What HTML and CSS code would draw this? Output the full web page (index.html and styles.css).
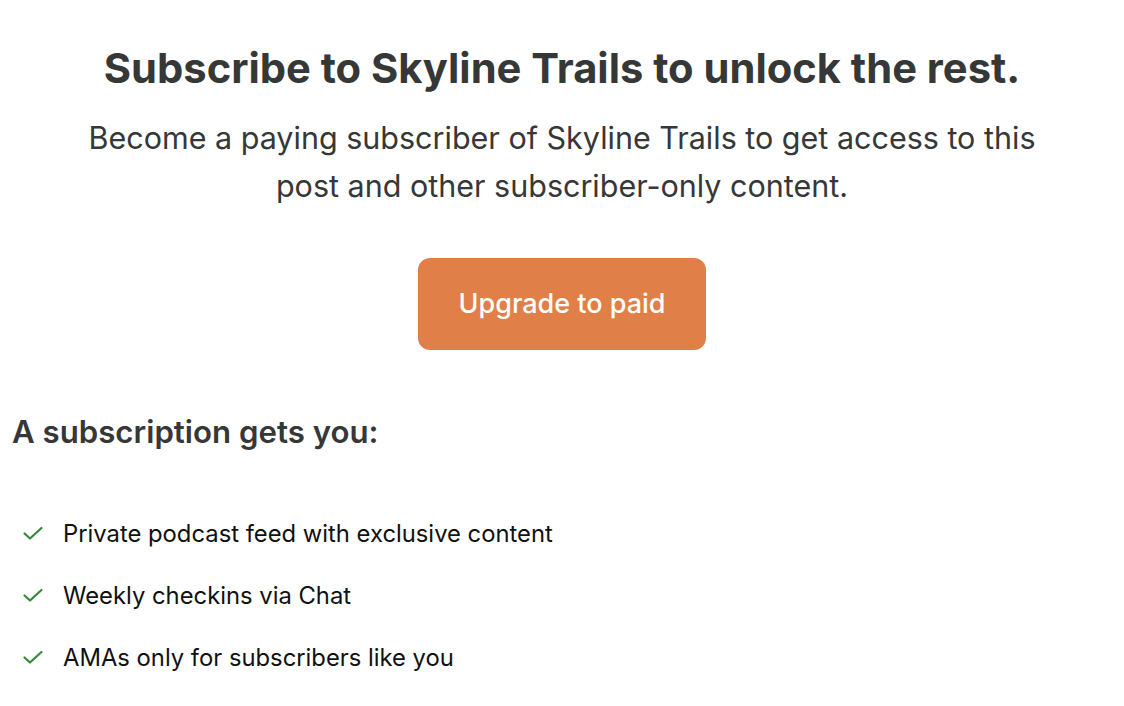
FILE: index.html
```html
<!DOCTYPE html>
<html lang="en">
<head>
    <meta charset="UTF-8">
    <meta name="viewport" content="width=device-width, initial-scale=1.0">
    <title>Subscribe to Skyline Trails</title>
    <link rel="stylesheet" href="styles.css">
</head>
<body>

<div class="paywall">
    <div class="paywall-head">
        <h2 class="paywall-title">Subscribe to Skyline Trails to unlock the rest.</h2>
        <p class="paywall-text">Become a paying subscriber of Skyline Trails to get access to this post and other subscriber-only content.</p>
        <a class="upgrade-btn" href="#">Upgrade to paid</a>
    </div>

    <h3 class="perks-title">A subscription gets you:</h3>

    <ul class="perks">
        <li>
            <svg class="check" viewBox="0 0 24 24" width="24" height="24"><path d="M3.5 12.5l5.5 5L20.5 7" fill="none" stroke="#368a36" stroke-width="2.2" stroke-linecap="round" stroke-linejoin="round"/></svg>
            Private podcast feed with exclusive content
        </li>
        <li>
            <svg class="check" viewBox="0 0 24 24" width="24" height="24"><path d="M3.5 12.5l5.5 5L20.5 7" fill="none" stroke="#368a36" stroke-width="2.2" stroke-linecap="round" stroke-linejoin="round"/></svg>
            Weekly checkins via Chat
        </li>
        <li>
            <svg class="check" viewBox="0 0 24 24" width="24" height="24"><path d="M3.5 12.5l5.5 5L20.5 7" fill="none" stroke="#368a36" stroke-width="2.2" stroke-linecap="round" stroke-linejoin="round"/></svg>
            AMAs only for subscribers like you
        </li>
    </ul>
</div>

</body>
</html>
```

FILE: styles.css
```css
body {
    margin: 0;
    font-family: Inter, "Noto Sans", sans-serif;
    background-color: #ffffff;
    color: #363737;
}

.paywall {
    padding: 0 12px;
}

.paywall-head {
    text-align: center;
    padding-top: 40px;
}

.paywall-title {
    margin: 0;
    font-size: 41.7px;
    line-height: 56px;
    font-weight: 700;
}

.paywall-text {
    margin: 18px auto 0;
    max-width: 980px;
    font-size: 30.5px;
    line-height: 48px;
}

.upgrade-btn {
    display: inline-block;
    margin-top: 48px;
    width: 288px;
    height: 92px;
    line-height: 92px;
    border-radius: 12px;
    background-color: #e07f47;
    color: #ffffff;
    font-size: 27px;
    font-weight: 500;
    text-decoration: none;
}

.perks-title {
    margin: 62px 0 0;
    font-size: 31.2px;
    line-height: 40px;
    font-weight: 600;
}

.perks {
    list-style: none;
    margin: 50px 0 0;
    padding: 0 0 0 9px;
}

.perks li {
    display: flex;
    align-items: center;
    gap: 18px;
    height: 62px;
    font-size: 23.8px;
    color: #111111;
}
```
